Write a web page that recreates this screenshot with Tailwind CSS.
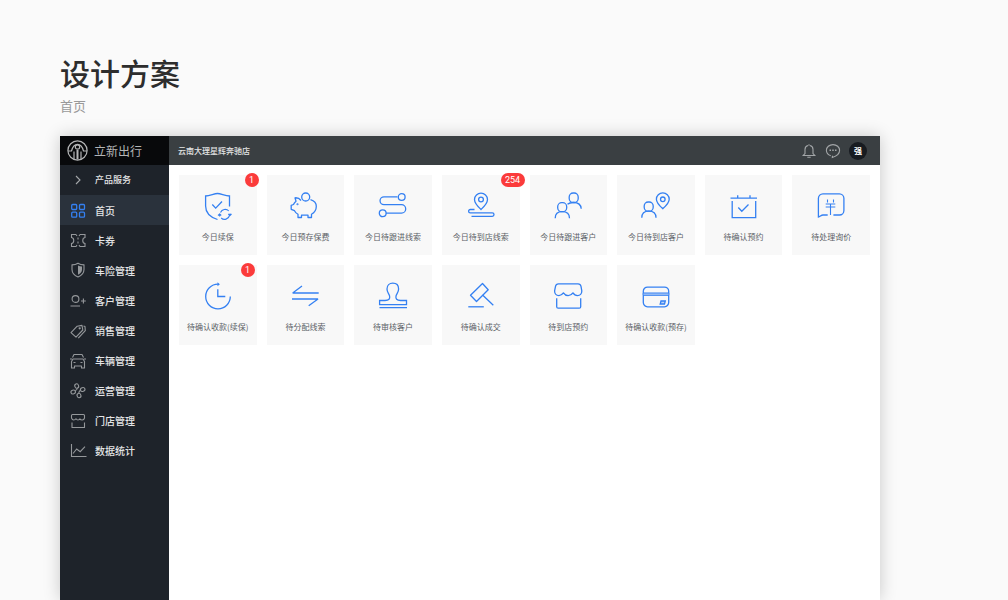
<!DOCTYPE html>
<html lang="zh-CN">
  <head>
    <meta charset="UTF-8" />
    <meta name="viewport" content="width=device-width, initial-scale=1.0" />
    <title>设计方案 - 首页</title>
    <script src="https://cdn.jsdelivr.net/npm/@tailwindcss/browser@4"></script>
  </head>
  <body class="bg-[#fafafa] font-['Noto_Sans_CJK_SC',sans-serif]">
    <div class="flex min-h-screen flex-col overflow-hidden pl-[60px] pr-32 pt-[54px]">
      <h1 class="text-[30px] leading-9 font-medium text-[#2d2d2d]">设计方案</h1>
      <p class="mt-1.5 text-[13px] leading-5 text-[#999]">首页</p>

      <div class="mt-5 flex flex-1 flex-col bg-white shadow-[0_0_16px_rgba(0,0,0,0.2)]">
        <!-- Top bar -->
        <header class="flex h-[29px] bg-[#3a3f42]">
          <a href="#" class="flex w-[109px] items-center gap-1.5 bg-[#08090b] pl-[7px] text-[12px] text-[#b4b5b6]">
            <svg class="size-[21px]" viewBox="0 0 21 21" fill="none" stroke="currentColor" stroke-width="1.2">
              <circle cx="10.500" cy="10.500" r="9.600" />
              <circle cx="10.500" cy="7" r="2.200" />
              <path d="M1 11h3.500c1-3.800 3-6.600 6-6.600s5 2.800 6 6.600H20M7 19.300V11.500M14 19.300V11.500" />
              <path stroke-width="2" d="M10.500 10v9.500" />
            </svg>
            立新出行
          </a>
          <div class="flex flex-1 items-center gap-2 pl-[9px] pr-[13px]">
            <span class="mr-auto text-[8px] font-medium text-[#e3e4e4]">云南大理星辉奔驰店</span>
            <button type="button" aria-label="通知" class="text-[#a3a6a8]">
              <svg class="size-4" viewBox="0 0 16 16" fill="none" stroke="currentColor" stroke-width="1.100">
                <path d="M7 2.500C4.800 3 4 4.700 4 6.500v4L2.200 12.500h11.600L12 10.500v-4C12 4.700 11.200 3 9 2.500M8 1.300v1.500M6.300 14.300h3.400" />
              </svg>
            </button>
            <button type="button" aria-label="消息" class="text-[#a3a6a8]">
              <svg class="size-4" viewBox="0 0 16 16" fill="none" stroke="currentColor" stroke-width="1.100">
                <path d="M5.800 12.700C3.200 12 1.400 9.900 1.400 7.300 1.400 4.100 4.300 1.600 8 1.600s6.600 2.500 6.600 5.700c0 3.500-3 5.900-7.300 7.200l.2-1.700" />
                <path stroke-width="1.500" stroke-dasharray="1.500 1.250" d="M4.500 7.300h7.200" />
              </svg>
            </button>
            <button type="button" class="size-[18px] rounded-full bg-[#171b20] text-[8px] leading-[18px] font-bold text-white">强</button>
          </div>
        </header>

        <div class="flex flex-1">
          <!-- Sidebar -->
          <nav class="w-[109px] bg-[#1e232a] text-[10px] font-medium text-[#e4e5e6]">
            <a href="#" class="flex h-[30px] items-center gap-2 pl-[9px] text-[9px]">
              <svg class="size-[18px] text-[#a5a8ab]" viewBox="0 0 18 18" fill="none" stroke="currentColor" stroke-width="1.100"><path d="M7 5l4 4-4 4" /></svg>
              产品服务
            </a>
            <a href="#" class="flex h-[30px] items-center gap-2 bg-[#2a323c] pl-[9px]">
              <svg class="size-[18px] text-[#3480f2]" viewBox="0 0 18 18" fill="none" stroke="currentColor" stroke-width="1.300">
                <rect x="2.700" y="3.500" width="5" height="5" rx="1" /><rect x="10.500" y="3.500" width="5" height="5" rx="1" />
                <rect x="2.700" y="11.200" width="5" height="5" rx="1" /><rect x="10.500" y="11.200" width="5" height="5" rx="1" />
              </svg>
              首页
            </a>
            <a href="#" class="flex h-[30px] items-center gap-2 pl-[9px]">
              <svg class="size-[18px] text-[#95989b]" viewBox="0 0 18 18" fill="none" stroke="currentColor" stroke-width="1.100">
                <path d="M7 3.500H2.500v3c3 .5 3 5.500 0 6v3H7l1-1.500M11 3.500h5v3c-3 .5-3 5.500 0 6v3h-5L10 14M7 3.500L8 5M11 3.500L10 5M9 6.500v2M9 10.500v2" />
              </svg>
              卡券
            </a>
            <a href="#" class="flex h-[30px] items-center gap-2 pl-[9px]">
              <svg class="size-[18px] text-[#95989b]" viewBox="0 0 18 18" fill="none" stroke="currentColor" stroke-width="1.100">
                <path d="M9 2.200c2 1.200 4 1.600 6 1.700v4.500c0 3.600-2.500 6-6 7.600-3.500-1.600-6-4-6-7.600V3.900c2-.1 4-.5 6-1.700z" />
                <path fill="currentColor" stroke="none" d="M9 4.500c1.300.7 2.500 1 4 1.100v3c0 2.500-1.500 4-4 5.200z" />
              </svg>
              车险管理
            </a>
            <a href="#" class="flex h-[30px] items-center gap-2 pl-[9px]">
              <svg class="size-[18px] text-[#95989b]" viewBox="0 0 18 18" fill="none" stroke="currentColor" stroke-width="1.100">
                <circle cx="6.500" cy="8" r="3.400" /><path d="M1.500 15h9.500M12 10h4.800M14.400 7.600v4.800" />
              </svg>
              客户管理
            </a>
            <a href="#" class="flex h-[30px] items-center gap-2 pl-[9px]">
              <svg class="size-[18px] text-[#95989b]" viewBox="0 0 18 18" fill="none" stroke="currentColor" stroke-width="1.100" stroke-linejoin="round">
                <path d="M8.200 5.200l4.800-.8.800 4.600-6.800 7.200-5-4.500zM14.500 4.900l1.500.6.300 4.200-7 7.500" /><circle cx="10.700" cy="7.300" r=".6" />
              </svg>
              销售管理
            </a>
            <a href="#" class="flex h-[30px] items-center gap-2 pl-[9px]">
              <svg class="size-[18px] text-[#95989b]" viewBox="0 0 18 18" fill="none" stroke="currentColor" stroke-width="1.100" stroke-linejoin="round">
                <path d="M3.500 6.500L5 3.500h8l1.500 3M1 8h2M15 8h2M2.500 17V10.500L4 8h10l1.500 2.500V17H12.500V15h-7v2zM4.500 11.500h2M11.500 11.500h2" />
              </svg>
              车辆管理
            </a>
            <a href="#" class="flex h-[30px] items-center gap-2 pl-[9px]">
              <svg class="size-[18px] text-[#95989b]" viewBox="0 0 18 18" fill="none" stroke="currentColor" stroke-width="1.100">
                <ellipse cx="7.700" cy="5" rx="1.900" ry="2.200" transform="rotate(-20 7.700 5)" />
                <ellipse cx="13.700" cy="8.500" rx="2.300" ry="1.900" transform="rotate(-20 13.700 8.500)" />
                <ellipse cx="10" cy="14.500" rx="1.900" ry="2.200" transform="rotate(-20 10 14.500)" />
                <ellipse cx="4.200" cy="11" rx="2.300" ry="1.900" transform="rotate(-20 4.200 11)" />
                <path d="M8.300 7.200q.2 1.300-2 2.500M11.500 9.200q-1.500.8-1.800 3" />
              </svg>
              运营管理
            </a>
            <a href="#" class="flex h-[30px] items-center gap-2 pl-[9px]">
              <svg class="size-[18px] text-[#95989b]" viewBox="0 0 18 18" fill="none" stroke="currentColor" stroke-width="1.100" stroke-linejoin="round">
                <path d="M3.500 3.500h11q1 0 1 1V7q-.5 2-2.300 2T11 7.800Q10.300 9 9 9T7 7.800Q6.200 9 4.700 9T2.500 7V4.500q0-1 1-1zM3 11.500v5h12.500v-5" />
              </svg>
              门店管理
            </a>
            <a href="#" class="flex h-[30px] items-center gap-2 pl-[9px]">
              <svg class="size-[18px] text-[#95989b]" viewBox="0 0 18 18" fill="none" stroke="currentColor" stroke-width="1.100">
                <path d="M2.500 3v12.500h15M4 12.500l3.700-4.500 3.500 2.700 4.800-5" />
              </svg>
              数据统计
            </a>
          </nav>

          <!-- To-do cards -->
          <main class="flex-1 p-2.5">
            <div class="grid grid-cols-8 gap-2.5 text-[8px] text-[#5b5f66]">
              <a href="#" class="relative flex h-20 flex-col items-center gap-2.5 bg-[#f8f8f8] pt-4 whitespace-nowrap">
                <svg class="size-[30px] text-[#3480f2]" viewBox="0 0 30 30" fill="none" stroke="currentColor" stroke-width="1.300">
                  <path d="M26.500 15.500V5C22 5 18 2.500 14.500 2.500S7 5 2.600 5v10c0 6 4 11 11.900 13.500M9.300 13.500l3.400 3.600 6.300-6.600" />
                  <path stroke-width="1.100" d="M17.500 21.500a5 5 0 0 1 8.300-1.500M26.500 24.500a5 5 0 0 1-8.300 2.500M16.800 25.500a5 5 0 0 1 0-3M27 24.500v-2M15 24.500l1.700-1.500 1.500 1.500M25.300 23l1.700 1.500 1.500-1.500" />
                </svg>
                <span>今日续保</span>
                <span class="absolute -top-0.5 -right-0.5 h-3.5 w-3.5 rounded-full bg-[#fb3b3b] text-center font-[Roboto] text-[9px] leading-3.5 text-white">1</span>
              </a>
              <a href="#" class="flex h-20 flex-col items-center gap-2.5 bg-[#f8f8f8] pt-4 whitespace-nowrap">
                <svg class="size-[30px] text-[#3480f2]" viewBox="0 0 30 30" fill="none" stroke="currentColor" stroke-width="1.300" stroke-linejoin="round">
                  <circle cx="15.700" cy="6" r="4" />
                  <path d="M11 9.500C9.500 7.500 7.500 6.500 5 6.800l1 3.400c-1.200 1-2 2-2.500 3.300L1.200 14.300v4l3.300 1.400c.8 1.600 2 2.800 3.500 3.600v3.200h3.500v-2.300h6.500v2.300h3.500v-3.200c3-1.700 4.800-4.300 4.800-8 0-3-2-5.500-5.800-6.700" />
                  <circle cx="7.500" cy="13.200" r=".4" />
                </svg>
                <span>今日预存保费</span>
              </a>
              <a href="#" class="flex h-20 flex-col items-center gap-2.5 bg-[#f8f8f8] pt-4 whitespace-nowrap">
                <svg class="size-[30px] text-[#3480f2]" viewBox="0 0 30 30" fill="none" stroke="currentColor" stroke-width="1.300">
                  <circle cx="23.700" cy="6" r="3.400" /><circle cx="4.700" cy="22.300" r="3.400" />
                  <path d="M19.500 5.800H6a3.900 3.900 0 0 0 0 7.900h17.500a4.200 4.200 0 0 1 0 8.400H8" />
                </svg>
                <span>今日待跟进线索</span>
              </a>
              <a href="#" class="relative flex h-20 flex-col items-center gap-2.5 bg-[#f8f8f8] pt-4 whitespace-nowrap">
                <svg class="size-[30px] text-[#3480f2]" viewBox="0 0 30 30" fill="none" stroke="currentColor" stroke-width="1.300">
                  <path d="M15 18.500c-3-2.800-6.500-6-6.500-10A6.500 6.500 0 0 1 15 2.200a6.500 6.500 0 0 1 6.500 6.300c0 4-3.500 7.200-6.500 10z" />
                  <circle cx="15" cy="8.500" r="2.400" />
                  <path d="M8.500 18.500H4.300a1.700 1.700 0 0 0 0 3.400h22a1.700 1.700 0 0 1 0 3.400H5.500" />
                </svg>
                <span>今日待到店线索</span>
                <span class="absolute -top-0.5 -right-[5px] h-3.5 w-6 rounded-full bg-[#fb3b3b] text-center font-[Roboto] text-[9px] leading-3.5 text-white">254</span>
              </a>
              <a href="#" class="flex h-20 flex-col items-center gap-2.5 bg-[#f8f8f8] pt-4 whitespace-nowrap">
                <svg class="size-[30px] text-[#3480f2]" viewBox="0 0 30 30" fill="none" stroke="currentColor" stroke-width="1.300">
                  <rect x="16.200" y="2" width="9" height="9.500" rx="4" /><rect x="4.700" y="11.700" width="9" height="9" rx="4" />
                  <path d="M14.500 13.300c1.500-1.300 3.700-1.800 6-1.800 4 0 7.500 2 7.700 6.300M2.200 27.300c0-4 2.500-6.600 7-6.600s7.300 2.600 7.300 6.600" />
                </svg>
                <span>今日待跟进客户</span>
              </a>
              <a href="#" class="flex h-20 flex-col items-center gap-2.5 bg-[#f8f8f8] pt-4 whitespace-nowrap">
                <svg class="size-[30px] text-[#3480f2]" viewBox="0 0 30 30" fill="none" stroke="currentColor" stroke-width="1.300">
                  <rect x="3.200" y="11" width="9" height="9.200" rx="4" /><path d="M.8 26.800c0-4 2.500-6.600 7-6.600s7.200 2.600 7.200 6.600" />
                  <path d="M21.800 17.700c-3-2.700-6.400-5.700-6.400-9.500a6.400 6.400 0 0 1 12.800 0c0 3.800-3.400 6.800-6.400 9.500z" /><circle cx="21.800" cy="8.300" r="2.300" />
                </svg>
                <span>今日待到店客户</span>
              </a>
              <a href="#" class="flex h-20 flex-col items-center gap-2.5 bg-[#f8f8f8] pt-4 whitespace-nowrap">
                <svg class="size-[30px] text-[#3480f2]" viewBox="0 0 30 30" fill="none" stroke="currentColor" stroke-width="1.300">
                  <path d="M1.500 7.200h26.500M8.700 4.300v3M21 4.300v3M3.200 10v16.700h23.500V10M9.300 16.500l3.500 3.800 6.700-6.800" />
                </svg>
                <span>待确认预约</span>
              </a>
              <a href="#" class="flex h-20 flex-col items-center gap-2.5 bg-[#f8f8f8] pt-4 whitespace-nowrap">
                <svg class="size-[30px] text-[#3480f2]" viewBox="0 0 30 30" fill="none" stroke="currentColor" stroke-width="1.300">
                  <path d="M11.700 24H7c-2 0-3 2-4.600 2V7.300a4.500 4.500 0 0 1 4.500-4.500h16.500a4.500 4.500 0 0 1 4.500 4.500v12.200a4.500 4.500 0 0 1-4.500 4.500h-6" />
                  <path stroke-width="1.100" d="M11.500 8.500v3M17.500 8.500v3M9.700 13h9.600M9.700 16h9.600M14.500 13v11" />
                </svg>
                <span>待处理询价</span>
              </a>
              <a href="#" class="relative flex h-20 flex-col items-center gap-2.5 bg-[#f8f8f8] pt-4 whitespace-nowrap">
                <svg class="size-[30px] text-[#3480f2]" viewBox="0 0 30 30" fill="none" stroke="currentColor" stroke-width="1.300">
                  <path d="M27.300 15.500A12.300 12.300 0 1 1 15 3.200M14.800 8.300v7.200h7.500" /><path fill="currentColor" d="M14.500 1.200l2.400 2-2.400 2z" stroke="none" />
                </svg>
                <span>待确认收款(续保)</span>
                <span class="absolute -top-0.5 right-0.5 h-3.5 w-3.5 rounded-full bg-[#fb3b3b] text-center font-[Roboto] text-[9px] leading-3.5 text-white">1</span>
              </a>
              <a href="#" class="flex h-20 flex-col items-center gap-2.5 bg-[#f8f8f8] pt-4 whitespace-nowrap">
                <svg class="size-[30px] text-[#3480f2]" viewBox="0 0 30 30" fill="none" stroke="currentColor" stroke-width="1.300" stroke-linejoin="bevel">
                  <path d="M12 5L2.700 12h26M2 18h26l-9.300 6.800" />
                </svg>
                <span>待分配线索</span>
              </a>
              <a href="#" class="flex h-20 flex-col items-center gap-2.5 bg-[#f8f8f8] pt-4 whitespace-nowrap">
                <svg class="size-[30px] text-[#3480f2]" viewBox="0 0 30 30" fill="none" stroke="currentColor" stroke-width="1.300">
                  <path d="M1.600 23.700v-4.200H7c4 0 5.200-1.800 4.600-4.400C11.200 12.700 9 11.700 9 7.900c0-3.700 2.500-5.800 5.800-5.800s5.800 2.100 5.800 5.800c0 3.800-2.200 4.800-2.600 7.200-.5 2.600.6 4.400 4.600 4.400h5.900v4.200zM1.500 26.700H29" />
                </svg>
                <span>待审核客户</span>
              </a>
              <a href="#" class="flex h-20 flex-col items-center gap-2.5 bg-[#f8f8f8] pt-4 whitespace-nowrap">
                <svg class="size-[30px] text-[#3480f2]" viewBox="0 0 30 30" fill="none" stroke="currentColor" stroke-width="1.300" stroke-linejoin="round">
                  <path d="M16.500 2.500l5.700 6.200L10.500 20.500l-6-6.300zM16.300 13.700l11 10.500" /><path d="M2.300 25.800h15.500" />
                </svg>
                <span>待确认成交</span>
              </a>
              <a href="#" class="flex h-20 flex-col items-center gap-2.5 bg-[#f8f8f8] pt-4 whitespace-nowrap">
                <svg class="size-[30px] text-[#3480f2]" viewBox="0 0 30 30" fill="none" stroke="currentColor" stroke-width="1.300" stroke-linejoin="round">
                  <path d="M5.500 2.900h19.500q2.500 0 3 2.500l.8 4.500c0 3-1.800 4.700-4.300 4.700-2 0-3.500-1-4.500-2.700-1.200 1.700-2.700 2.700-4.800 2.700s-3.700-1-4.800-2.700c-1.200 1.700-2.500 2.700-4.500 2.700-2.500 0-4.300-1.700-4.300-4.700l.9-4.500q.5-2.500 3-2.500z" />
                  <path d="M3.700 17.200v8.500q0 1.500 1.500 1.500h21q1.500 0 1.500-1.500v-8.500" />
                </svg>
                <span>待到店预约</span>
              </a>
              <a href="#" class="flex h-20 flex-col items-center gap-2.5 bg-[#f8f8f8] pt-4 whitespace-nowrap">
                <svg class="size-[30px] text-[#3480f2]" viewBox="0 0 30 30" fill="none" stroke="currentColor" stroke-width="1.300">
                  <path fill="currentColor" fill-opacity=".4" d="M2 12h26v2.300H2z" stroke-width="1" />
                  <path d="M2.300 12v-1.700a4.200 4.200 0 0 1 4.200-4.200h17a4.200 4.200 0 0 1 4.200 4.200V12M2.300 14.300v7.300a4.200 4.200 0 0 0 4.200 4.200h17a4.200 4.200 0 0 0 4.200-4.200v-7.300" />
                  <path fill="currentColor" fill-opacity=".3" d="M20 20h4.300l-.8 3h-4.300z" />
                </svg>
                <span>待确认收款(预存)</span>
              </a>
            </div>
          </main>
        </div>
      </div>
    </div>
  </body>
</html>
